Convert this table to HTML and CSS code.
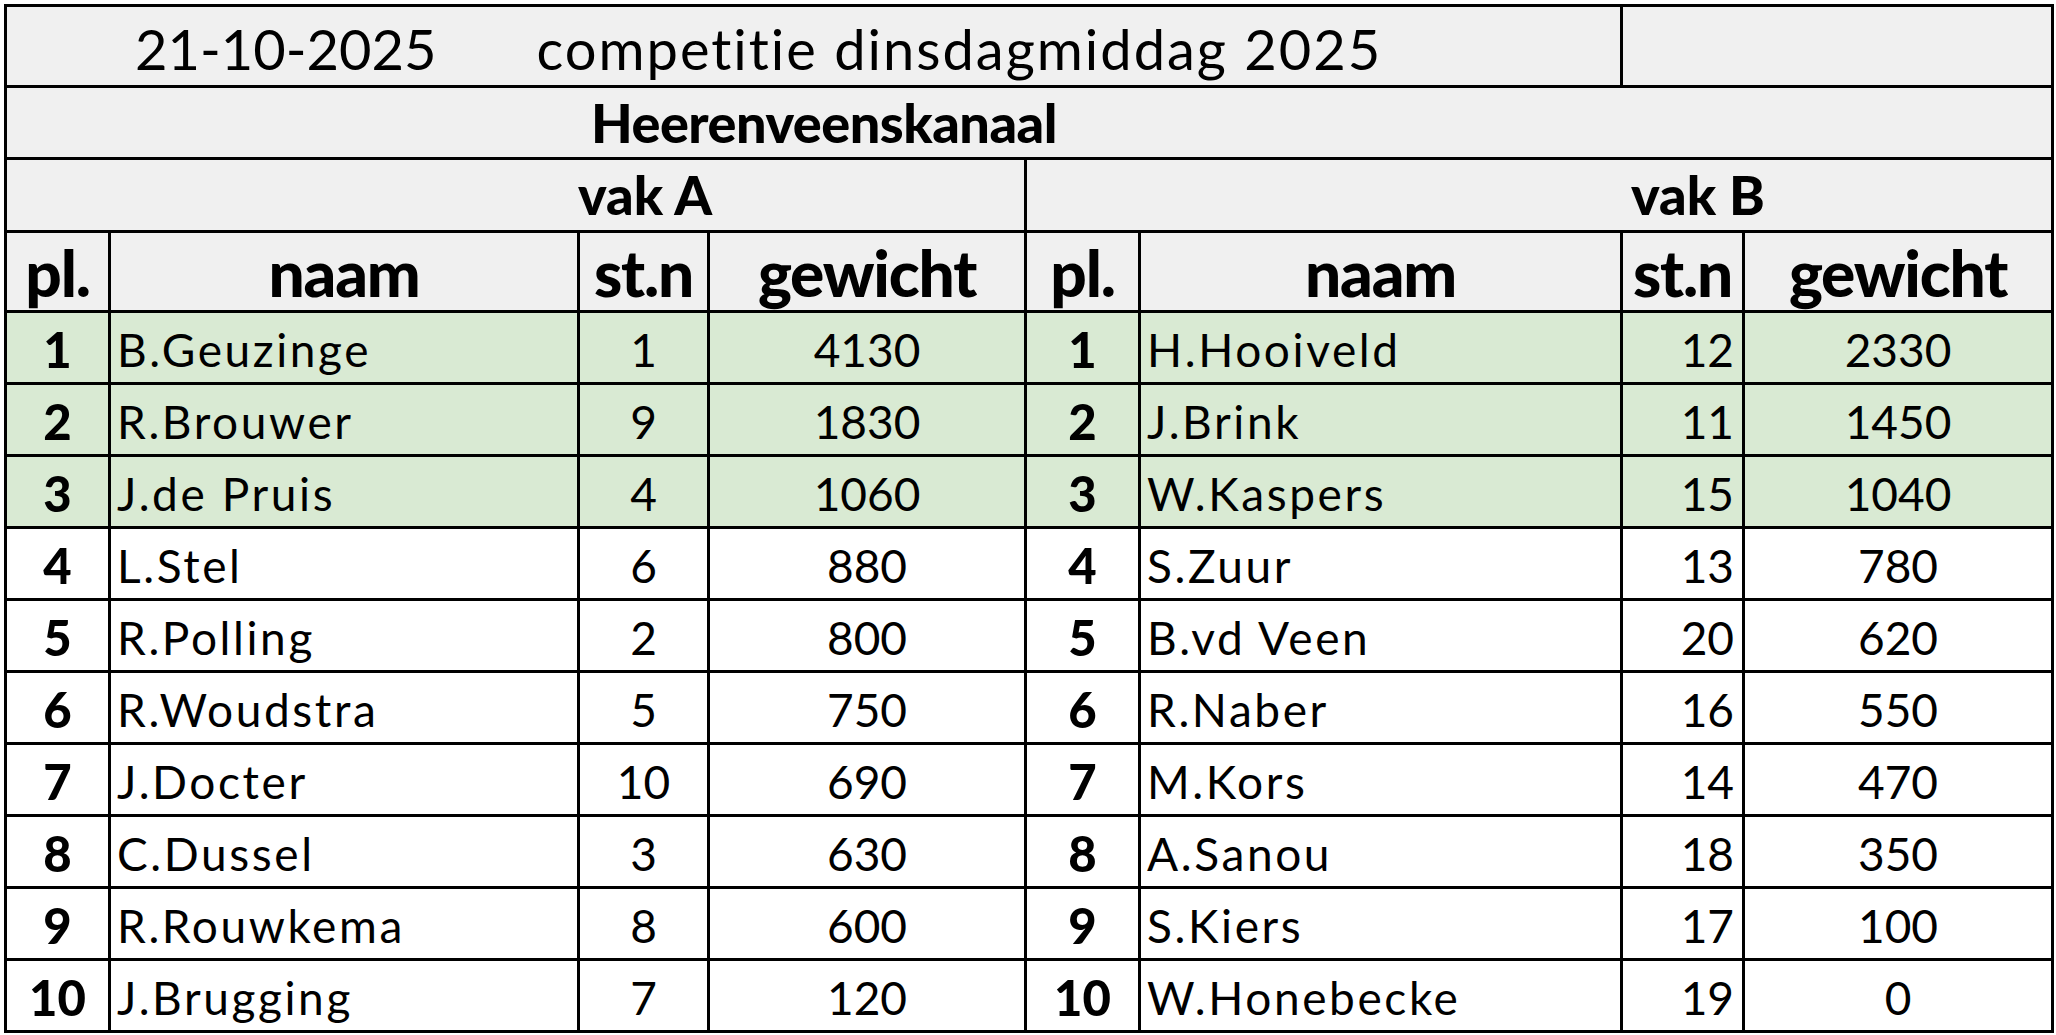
FILE: index.html
```html
<!DOCTYPE html>
<html lang="nl">
<head>
<meta charset="utf-8">
<title>competitie dinsdagmiddag 2025</title>
<link rel="stylesheet" href="styles.css">
</head>
<body>
<div class="sheet">
  <div class="c title span6"><span class="date">21-10-2025</span><span class="comp">competitie dinsdagmiddag 2025</span></div>
  <div class="c title span2"></div>
  <div class="c place span8">Heerenveenskanaal</div>
  <div class="c vak vak-a span4">vak A</div>
  <div class="c vak vak-b span4">vak B</div>

  <div class="c hd">pl.</div><div class="c hd">naam</div><div class="c hd">st.n</div><div class="c hd">gewicht</div>
  <div class="c hd">pl.</div><div class="c hd">naam</div><div class="c hd">st.n</div><div class="c hd">gewicht</div>

  <div class="c pl g">1</div><div class="c nm g">B.Geuzinge</div><div class="c num g">1</div><div class="c num g">4130</div>
  <div class="c pl g">1</div><div class="c nm g">H.Hooiveld</div><div class="c num r g">12</div><div class="c num g">2330</div>

  <div class="c pl g">2</div><div class="c nm g">R.Brouwer</div><div class="c num g">9</div><div class="c num g">1830</div>
  <div class="c pl g">2</div><div class="c nm g">J.Brink</div><div class="c num r g">11</div><div class="c num g">1450</div>

  <div class="c pl g">3</div><div class="c nm g">J.de Pruis</div><div class="c num g">4</div><div class="c num g">1060</div>
  <div class="c pl g">3</div><div class="c nm g">W.Kaspers</div><div class="c num r g">15</div><div class="c num g">1040</div>

  <div class="c pl">4</div><div class="c nm">L.Stel</div><div class="c num">6</div><div class="c num">880</div>
  <div class="c pl">4</div><div class="c nm">S.Zuur</div><div class="c num r">13</div><div class="c num">780</div>

  <div class="c pl">5</div><div class="c nm">R.Polling</div><div class="c num">2</div><div class="c num">800</div>
  <div class="c pl">5</div><div class="c nm">B.vd Veen</div><div class="c num r">20</div><div class="c num">620</div>

  <div class="c pl">6</div><div class="c nm">R.Woudstra</div><div class="c num">5</div><div class="c num">750</div>
  <div class="c pl">6</div><div class="c nm">R.Naber</div><div class="c num r">16</div><div class="c num">550</div>

  <div class="c pl">7</div><div class="c nm">J.Docter</div><div class="c num">10</div><div class="c num">690</div>
  <div class="c pl">7</div><div class="c nm">M.Kors</div><div class="c num r">14</div><div class="c num">470</div>

  <div class="c pl">8</div><div class="c nm">C.Dussel</div><div class="c num">3</div><div class="c num">630</div>
  <div class="c pl">8</div><div class="c nm">A.Sanou</div><div class="c num r">18</div><div class="c num">350</div>

  <div class="c pl">9</div><div class="c nm">R.Rouwkema</div><div class="c num">8</div><div class="c num">600</div>
  <div class="c pl">9</div><div class="c nm">S.Kiers</div><div class="c num r">17</div><div class="c num">100</div>

  <div class="c pl">10</div><div class="c nm">J.Brugging</div><div class="c num">7</div><div class="c num">120</div>
  <div class="c pl">10</div><div class="c nm">W.Honebecke</div><div class="c num r">19</div><div class="c num">0</div>
</div>
</body>
</html>
```

FILE: styles.css
```css
html, body {
  margin: 0;
  padding: 0;
  background: #ffffff;
}

body {
  font-family: Lato, "Liberation Sans", sans-serif;
  color: #000000;
}

.sheet {
  margin: 4px 0 0 4px;
  width: max-content;
  display: grid;
  grid-template-columns: 101px 466px 127px 314px 111px 479px 119px 306px;
  grid-template-rows: 78px 69px 70px 77px repeat(10, 69px);
  gap: 3px;
  padding: 3px;
  background: #000000;
}

.c {
  background: #ffffff;
  display: flex;
  align-items: center;
  white-space: nowrap;
  line-height: 1;
}

.span2 { grid-column: span 2; }
.span4 { grid-column: span 4; }
.span6 { grid-column: span 6; }
.span8 { grid-column: span 8; }

.title {
  background: #f0f0f0;
  font-size: 56px;
  font-weight: 400;
  padding-top: 6px;
}

.date {
  margin-left: 128px;
}

.comp {
  margin-left: 100px;
  letter-spacing: 2px;
}

.place,
.vak {
  background: #f0f0f0;
  font-weight: 900;
}

.place {
  font-size: 54px;
  letter-spacing: -0.5px;
  padding-left: 584px;
}

.vak {
  font-size: 54px;
  letter-spacing: 0;
}

.vak-a {
  padding-left: 571px;
}

.vak-b {
  padding-left: 604px;
}

.hd {
  background: #f0f0f0;
  justify-content: center;
  font-weight: 900;
  font-size: 64px;
  letter-spacing: -1.2px;
  padding-top: 2px;
}

.pl {
  justify-content: center;
  font-weight: 900;
  font-size: 49px;
}

.nm {
  font-size: 46px;
  letter-spacing: 2.6px;
  padding-left: 6px;
}

.num {
  justify-content: center;
  font-size: 46px;
}

.num.r {
  justify-content: flex-end;
  padding-right: 8px;
}

.pl, .nm, .num {
  padding-top: 4px;
}

.g {
  background: #d9ead3;
}
```
